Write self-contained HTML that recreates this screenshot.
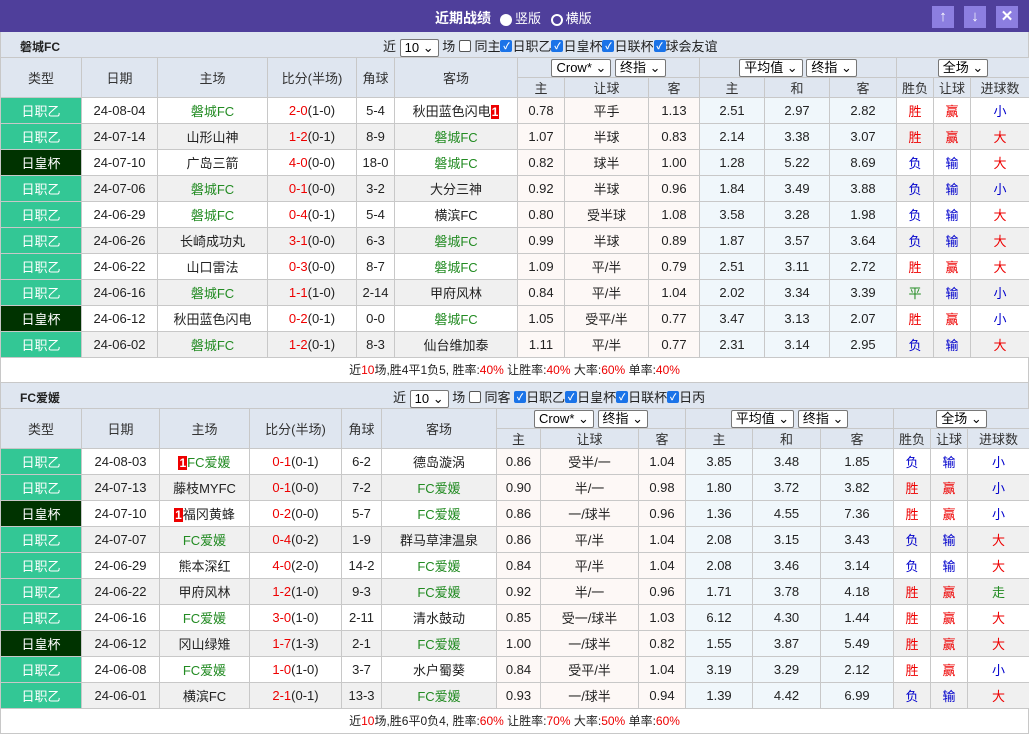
<!DOCTYPE html>
<html><head><meta charset="utf-8">
<style>
*{margin:0;padding:0;box-sizing:border-box}
body{width:1029px;height:736px;background:#fff;font-family:"Liberation Sans","Noto Sans CJK SC",sans-serif;font-size:13px;color:#222;overflow:hidden;position:relative}
.top{position:absolute;left:0;top:0;width:1029px;height:32px;background:#4f3f9b;color:#fff}
.top .t{position:absolute;left:435px;top:8px;font-weight:bold;font-size:14px}
.rd{display:inline-block;width:12px;height:12px;border-radius:50%;vertical-align:middle;margin:0 3px 0 6px}
.top .r{position:absolute;left:494px;top:8px;font-size:13px}
.btn{position:absolute;top:6px;width:22px;height:22px;background:#8c7ee0;color:#fff;text-align:center;font-size:15px;line-height:22px;font-weight:bold}
.lbl{position:absolute;left:0;width:1029px;height:25px;background:#dfe6f0;border-left:1px solid #c8c8c8;border-right:1px solid #c8c8c8}
.lbl b{position:absolute;left:19px;top:6px;font-size:12px}
.lbl .f{position:absolute;top:4px;font-size:13px;white-space:nowrap}
.sel{display:inline-block;border:1px solid #777;border-radius:2px;background:#fff;height:18px;line-height:16px;padding:0 4px;font-size:13px;color:#000;vertical-align:middle}
.cb{display:inline-block;width:12px;height:12px;border-radius:2px;vertical-align:middle;position:relative;top:-2px;background:#1a73e8;color:#fff;font-size:9px;line-height:12px;text-align:center;font-weight:bold}
.cbo{display:inline-block;width:12px;height:12px;border-radius:2px;vertical-align:middle;position:relative;top:-2px;border:1px solid #555;background:#fff}
table{position:absolute;left:0;border-collapse:collapse;table-layout:fixed;width:1029px}
td,th{border:1px solid #c8c8c8;text-align:center;font-weight:normal;white-space:nowrap;overflow:hidden;font-size:13px}
thead td{background:#dfe6f0;height:20px;color:#333}
tbody td{height:26px}
tr.e td{background:#f0f0f0}
tbody td.p{background:#fdf8f6}
tbody td.b{background:#f0f7fb}
td.l1{background:#33c795 !important;color:#fff}
td.l2{background:#003300 !important;color:#fff}
.g{color:#228b22}.rr{color:#e00}.bl{color:#00c}
.n{display:inline-block;background:#e00;color:#fff;font-size:12px;line-height:14px;padding:0 1px;font-weight:bold}
.sum{position:absolute;left:0;width:1029px;height:26px;border:1px solid #c8c8c8;text-align:center;line-height:24px;font-size:12px;background:#fff}
</style></head><body>
<div class="top"><span class="t">近期战绩</span><span class="r"><span class="rd" style="background:#fff"></span>竖版 <span class="rd" style="border:2px solid #fff;background:#4f3f9b"></span>横版</span>
<div class="btn" style="left:932px">↑</div><div class="btn" style="left:964px">↓</div><div class="btn" style="left:996px">✕</div></div>

<div class="lbl" style="top:32px"><b>磐城FC</b><span class="f" style="left:382px">近 <span class="sel">10 ⌄</span> 场 <span class="cbo"></span> 同主<span class="cb">✓</span>日职乙<span class="cb">✓</span>日皇杯<span class="cb">✓</span>日联杯<span class="cb">✓</span>球会友谊</span></div>

<table style="top:57px">
<colgroup><col style="width:81px"><col style="width:76px"><col style="width:110px"><col style="width:89px"><col style="width:38px"><col style="width:123px"><col style="width:47px"><col style="width:84px"><col style="width:51px"><col style="width:65px"><col style="width:65px"><col style="width:67px"><col style="width:37px"><col style="width:37px"><col style="width:59px"></colgroup>
<thead><tr><td rowspan="2">类型</td><td rowspan="2">日期</td><td rowspan="2">主场</td><td rowspan="2">比分(半场)</td><td rowspan="2">角球</td><td rowspan="2">客场</td><td colspan="3"><span class="sel">Crow* ⌄</span> <span class="sel">终指 ⌄</span></td><td colspan="3"><span class="sel">平均值 ⌄</span> <span class="sel">终指 ⌄</span></td><td colspan="3"><span class="sel">全场 ⌄</span></td></tr>
<tr><td>主</td><td>让球</td><td>客</td><td>主</td><td>和</td><td>客</td><td>胜负</td><td>让球</td><td>进球数</td></tr></thead>
<tbody>
<tr><td class="l1">日职乙</td><td>24-08-04</td><td class="g">磐城FC</td><td><span class="rr">2-0</span>(1-0)</td><td>5-4</td><td>秋田蓝色闪电<span class="n">1</span></td><td class="p">0.78</td><td class="p">平手</td><td class="p">1.13</td><td class="b">2.51</td><td class="b">2.97</td><td class="b">2.82</td><td class="rr">胜</td><td class="rr">赢</td><td class="bl">小</td></tr>
<tr class="e"><td class="l1">日职乙</td><td>24-07-14</td><td>山形山神</td><td><span class="rr">1-2</span>(0-1)</td><td>8-9</td><td class="g">磐城FC</td><td class="p">1.07</td><td class="p">半球</td><td class="p">0.83</td><td class="b">2.14</td><td class="b">3.38</td><td class="b">3.07</td><td class="rr">胜</td><td class="rr">赢</td><td class="rr">大</td></tr>
<tr><td class="l2">日皇杯</td><td>24-07-10</td><td>广岛三箭</td><td><span class="rr">4-0</span>(0-0)</td><td>18-0</td><td class="g">磐城FC</td><td class="p">0.82</td><td class="p">球半</td><td class="p">1.00</td><td class="b">1.28</td><td class="b">5.22</td><td class="b">8.69</td><td class="bl">负</td><td class="bl">输</td><td class="rr">大</td></tr>
<tr class="e"><td class="l1">日职乙</td><td>24-07-06</td><td class="g">磐城FC</td><td><span class="rr">0-1</span>(0-0)</td><td>3-2</td><td>大分三神</td><td class="p">0.92</td><td class="p">半球</td><td class="p">0.96</td><td class="b">1.84</td><td class="b">3.49</td><td class="b">3.88</td><td class="bl">负</td><td class="bl">输</td><td class="bl">小</td></tr>
<tr><td class="l1">日职乙</td><td>24-06-29</td><td class="g">磐城FC</td><td><span class="rr">0-4</span>(0-1)</td><td>5-4</td><td>横滨FC</td><td class="p">0.80</td><td class="p">受半球</td><td class="p">1.08</td><td class="b">3.58</td><td class="b">3.28</td><td class="b">1.98</td><td class="bl">负</td><td class="bl">输</td><td class="rr">大</td></tr>
<tr class="e"><td class="l1">日职乙</td><td>24-06-26</td><td>长崎成功丸</td><td><span class="rr">3-1</span>(0-0)</td><td>6-3</td><td class="g">磐城FC</td><td class="p">0.99</td><td class="p">半球</td><td class="p">0.89</td><td class="b">1.87</td><td class="b">3.57</td><td class="b">3.64</td><td class="bl">负</td><td class="bl">输</td><td class="rr">大</td></tr>
<tr><td class="l1">日职乙</td><td>24-06-22</td><td>山口雷法</td><td><span class="rr">0-3</span>(0-0)</td><td>8-7</td><td class="g">磐城FC</td><td class="p">1.09</td><td class="p">平/半</td><td class="p">0.79</td><td class="b">2.51</td><td class="b">3.11</td><td class="b">2.72</td><td class="rr">胜</td><td class="rr">赢</td><td class="rr">大</td></tr>
<tr class="e"><td class="l1">日职乙</td><td>24-06-16</td><td class="g">磐城FC</td><td><span class="rr">1-1</span>(1-0)</td><td>2-14</td><td>甲府风林</td><td class="p">0.84</td><td class="p">平/半</td><td class="p">1.04</td><td class="b">2.02</td><td class="b">3.34</td><td class="b">3.39</td><td class="g">平</td><td class="bl">输</td><td class="bl">小</td></tr>
<tr><td class="l2">日皇杯</td><td>24-06-12</td><td>秋田蓝色闪电</td><td><span class="rr">0-2</span>(0-1)</td><td>0-0</td><td class="g">磐城FC</td><td class="p">1.05</td><td class="p">受平/半</td><td class="p">0.77</td><td class="b">3.47</td><td class="b">3.13</td><td class="b">2.07</td><td class="rr">胜</td><td class="rr">赢</td><td class="bl">小</td></tr>
<tr class="e"><td class="l1">日职乙</td><td>24-06-02</td><td class="g">磐城FC</td><td><span class="rr">1-2</span>(0-1)</td><td>8-3</td><td>仙台维加泰</td><td class="p">1.11</td><td class="p">平/半</td><td class="p">0.77</td><td class="b">2.31</td><td class="b">3.14</td><td class="b">2.95</td><td class="bl">负</td><td class="bl">输</td><td class="rr">大</td></tr>
</tbody></table>
<div class="sum" style="top:357px">近<span class="rr">10</span>场,胜4平1负5, 胜率:<span class="rr">40%</span> 让胜率:<span class="rr">40%</span> 大率:<span class="rr">60%</span> 单率:<span class="rr">40%</span></div>

<div class="lbl" style="top:383px"><b>FC爱媛</b><span class="f" style="left:392px">近 <span class="sel">10 ⌄</span> 场 <span class="cbo"></span> 同客 <span class="cb">✓</span>日职乙<span class="cb">✓</span>日皇杯<span class="cb">✓</span>日联杯<span class="cb">✓</span>日丙</span></div>

<table style="top:408px">
<colgroup><col style="width:81px"><col style="width:78px"><col style="width:90px"><col style="width:92px"><col style="width:40px"><col style="width:115px"><col style="width:44px"><col style="width:98px"><col style="width:47px"><col style="width:67px"><col style="width:68px"><col style="width:73px"><col style="width:37px"><col style="width:37px"><col style="width:62px"></colgroup>
<thead><tr><td rowspan="2">类型</td><td rowspan="2">日期</td><td rowspan="2">主场</td><td rowspan="2">比分(半场)</td><td rowspan="2">角球</td><td rowspan="2">客场</td><td colspan="3"><span class="sel">Crow* ⌄</span> <span class="sel">终指 ⌄</span></td><td colspan="3"><span class="sel">平均值 ⌄</span> <span class="sel">终指 ⌄</span></td><td colspan="3"><span class="sel">全场 ⌄</span></td></tr>
<tr><td>主</td><td>让球</td><td>客</td><td>主</td><td>和</td><td>客</td><td>胜负</td><td>让球</td><td>进球数</td></tr></thead>
<tbody>
<tr><td class="l1">日职乙</td><td>24-08-03</td><td class="g"><span class="n">1</span>FC爱媛</td><td><span class="rr">0-1</span>(0-1)</td><td>6-2</td><td>德岛漩涡</td><td class="p">0.86</td><td class="p">受半/一</td><td class="p">1.04</td><td class="b">3.85</td><td class="b">3.48</td><td class="b">1.85</td><td class="bl">负</td><td class="bl">输</td><td class="bl">小</td></tr>
<tr class="e"><td class="l1">日职乙</td><td>24-07-13</td><td>藤枝MYFC</td><td><span class="rr">0-1</span>(0-0)</td><td>7-2</td><td class="g">FC爱媛</td><td class="p">0.90</td><td class="p">半/一</td><td class="p">0.98</td><td class="b">1.80</td><td class="b">3.72</td><td class="b">3.82</td><td class="rr">胜</td><td class="rr">赢</td><td class="bl">小</td></tr>
<tr><td class="l2">日皇杯</td><td>24-07-10</td><td><span class="n">1</span>福冈黄蜂</td><td><span class="rr">0-2</span>(0-0)</td><td>5-7</td><td class="g">FC爱媛</td><td class="p">0.86</td><td class="p">一/球半</td><td class="p">0.96</td><td class="b">1.36</td><td class="b">4.55</td><td class="b">7.36</td><td class="rr">胜</td><td class="rr">赢</td><td class="bl">小</td></tr>
<tr class="e"><td class="l1">日职乙</td><td>24-07-07</td><td class="g">FC爱媛</td><td><span class="rr">0-4</span>(0-2)</td><td>1-9</td><td>群马草津温泉</td><td class="p">0.86</td><td class="p">平/半</td><td class="p">1.04</td><td class="b">2.08</td><td class="b">3.15</td><td class="b">3.43</td><td class="bl">负</td><td class="bl">输</td><td class="rr">大</td></tr>
<tr><td class="l1">日职乙</td><td>24-06-29</td><td>熊本深红</td><td><span class="rr">4-0</span>(2-0)</td><td>14-2</td><td class="g">FC爱媛</td><td class="p">0.84</td><td class="p">平/半</td><td class="p">1.04</td><td class="b">2.08</td><td class="b">3.46</td><td class="b">3.14</td><td class="bl">负</td><td class="bl">输</td><td class="rr">大</td></tr>
<tr class="e"><td class="l1">日职乙</td><td>24-06-22</td><td>甲府风林</td><td><span class="rr">1-2</span>(1-0)</td><td>9-3</td><td class="g">FC爱媛</td><td class="p">0.92</td><td class="p">半/一</td><td class="p">0.96</td><td class="b">1.71</td><td class="b">3.78</td><td class="b">4.18</td><td class="rr">胜</td><td class="rr">赢</td><td class="g">走</td></tr>
<tr><td class="l1">日职乙</td><td>24-06-16</td><td class="g">FC爱媛</td><td><span class="rr">3-0</span>(1-0)</td><td>2-11</td><td>清水鼓动</td><td class="p">0.85</td><td class="p">受一/球半</td><td class="p">1.03</td><td class="b">6.12</td><td class="b">4.30</td><td class="b">1.44</td><td class="rr">胜</td><td class="rr">赢</td><td class="rr">大</td></tr>
<tr class="e"><td class="l2">日皇杯</td><td>24-06-12</td><td>冈山绿雉</td><td><span class="rr">1-7</span>(1-3)</td><td>2-1</td><td class="g">FC爱媛</td><td class="p">1.00</td><td class="p">一/球半</td><td class="p">0.82</td><td class="b">1.55</td><td class="b">3.87</td><td class="b">5.49</td><td class="rr">胜</td><td class="rr">赢</td><td class="rr">大</td></tr>
<tr><td class="l1">日职乙</td><td>24-06-08</td><td class="g">FC爱媛</td><td><span class="rr">1-0</span>(1-0)</td><td>3-7</td><td>水户蜀葵</td><td class="p">0.84</td><td class="p">受平/半</td><td class="p">1.04</td><td class="b">3.19</td><td class="b">3.29</td><td class="b">2.12</td><td class="rr">胜</td><td class="rr">赢</td><td class="bl">小</td></tr>
<tr class="e"><td class="l1">日职乙</td><td>24-06-01</td><td>横滨FC</td><td><span class="rr">2-1</span>(0-1)</td><td>13-3</td><td class="g">FC爱媛</td><td class="p">0.93</td><td class="p">一/球半</td><td class="p">0.94</td><td class="b">1.39</td><td class="b">4.42</td><td class="b">6.99</td><td class="bl">负</td><td class="bl">输</td><td class="rr">大</td></tr>
</tbody></table>
<div class="sum" style="top:708px">近<span class="rr">10</span>场,胜6平0负4, 胜率:<span class="rr">60%</span> 让胜率:<span class="rr">70%</span> 大率:<span class="rr">50%</span> 单率:<span class="rr">60%</span></div>
</body></html>
